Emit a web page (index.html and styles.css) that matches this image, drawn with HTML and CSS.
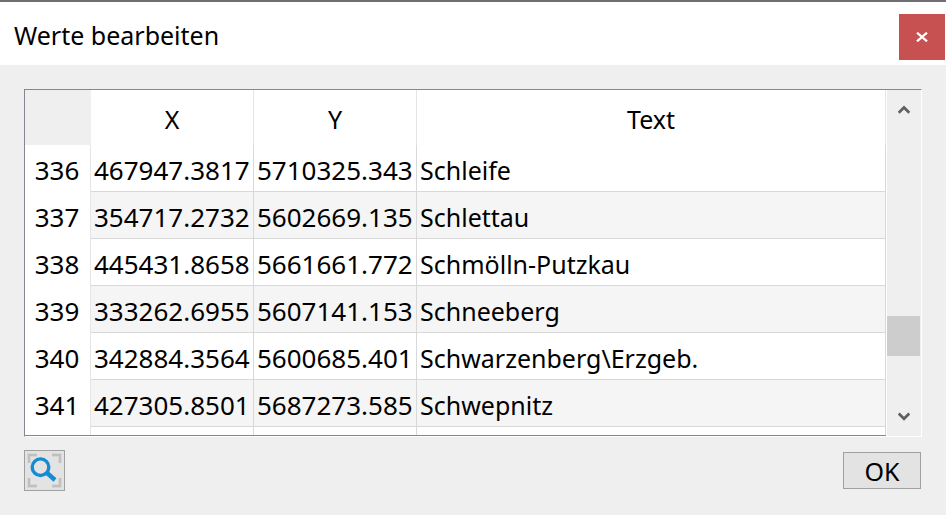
FILE: index.html
```html
<!DOCTYPE html>
<html lang="de">
<head>
    <meta charset="UTF-8">
    <meta name="viewport" content="width=device-width, initial-scale=1.0">
    <title>Werte bearbeiten</title>
    <link rel="stylesheet" href="styles.css">
</head>
<body>
    <header class="title-bar">
        <h1>Werte bearbeiten</h1>
        <button type="button" class="close-button" aria-label="Schließen">
            <svg width="12" height="10" viewBox="0 0 12 10"><path d="M1 0.7L11 9.3M11 0.7L1 9.3" stroke="#fff" stroke-width="2.3" fill="none"/></svg>
        </button>
    </header>
    <main class="content">
        <div class="table-frame">
            <div class="table-view">
                <table class="values-table">
                    <colgroup>
                        <col class="col-number">
                        <col class="col-coord">
                        <col class="col-coord">
                        <col>
                    </colgroup>
                    <thead>
                        <tr><td class="corner"></td><th scope="col">X</th><th scope="col">Y</th><th scope="col">Text</th></tr>
                    </thead>
                    <tbody>
                        <tr><th scope="row">336</th><td>467947.3817</td><td>5710325.343</td><td class="name">Schleife</td></tr>
                        <tr><th scope="row">337</th><td>354717.2732</td><td>5602669.135</td><td class="name">Schlettau</td></tr>
                        <tr><th scope="row">338</th><td>445431.8658</td><td>5661661.772</td><td class="name">Schmölln-Putzkau</td></tr>
                        <tr><th scope="row">339</th><td>333262.6955</td><td>5607141.153</td><td class="name">Schneeberg</td></tr>
                        <tr><th scope="row">340</th><td>342884.3564</td><td>5600685.401</td><td class="name">Schwarzenberg\Erzgeb.</td></tr>
                        <tr><th scope="row">341</th><td>427305.8501</td><td>5687273.585</td><td class="name">Schwepnitz</td></tr>
                        <tr><th scope="row"></th><td></td><td></td><td></td></tr>
                    </tbody>
                </table>
            </div>
            <div class="scrollbar">
                <button type="button" class="scroll-button" aria-label="Nach oben">
                    <svg width="12" height="10" viewBox="0 0 12 10"><path d="M0.7 7.8L6 2.5L11.3 7.8" stroke="#606060" stroke-width="2.8" fill="none"/></svg>
                </button>
                <div class="track-above"></div>
                <div class="thumb"></div>
                <div class="track-below"></div>
                <button type="button" class="scroll-button" aria-label="Nach unten">
                    <svg width="12" height="10" viewBox="0 0 12 10"><path d="M0.7 2.5L6 7.8L11.3 2.5" stroke="#606060" stroke-width="2.8" fill="none"/></svg>
                </button>
            </div>
        </div>
        <div class="footer">
            <button type="button" class="zoom-button" aria-label="Zoomen">
                <svg width="39" height="39" viewBox="0 0 39 39" fill="none">
                    <path d="M4 12V4H12M27 4H35V12M35 27V35H27M12 35H4V27" stroke="#d6d6d6" stroke-width="4"/>
                    <path d="M4 12V4H12M27 4H35V12M35 27V35H27M12 35H4V27" stroke="#c0c0c0" stroke-width="2"/>
                    <circle cx="15.5" cy="16.2" r="8.3" stroke="#148bd2" stroke-width="3.4"/>
                    <path d="M21.5 21.5L30 29" stroke="#148bd2" stroke-width="4.4"/>
                </svg>
            </button>
            <button type="button" class="ok-button">OK</button>
        </div>
    </main>
</body>
</html>
```
FILE: styles.css
```css
* {
    box-sizing: border-box;
}
body {
    font-family: 'Noto Sans', 'Segoe UI', sans-serif;
    font-size: 25px;
    margin: 0;
    height: 100vh;
    min-height: 300px;
    display: flex;
    flex-direction: column;
    background-color: #efefef;
    color: #000;
}
button {
    display: flex;
    justify-content: center;
    align-items: center;
    padding: 0;
    border: none;
    font: inherit;
    color: inherit;
}
.title-bar {
    display: flex;
    justify-content: space-between;
    align-items: flex-start;
    padding: 12px 1px 5px 14px;
    background-color: #fff;
    border-top: 2px solid #706e70;
}
.title-bar h1 {
    margin: 0;
    font-size: 25px;
    font-weight: normal;
    line-height: 42px;
}
.close-button {
    width: 46px;
    height: 46px;
    background-color: #c75050;
}
.content {
    flex: 1;
    min-height: 0;
    display: flex;
    flex-direction: column;
    padding: 24px;
}
.table-frame {
    flex: 1;
    min-height: 0;
    display: flex;
    border-top: 1px solid #828790;
    border-left: 1px solid #828790;
    border-right: 1px solid #fff;
    border-bottom: 1px solid #fff;
}
.table-view {
    flex: 1;
    min-width: 0;
    overflow: hidden;
    background-color: #fff;
    border-bottom: 1px solid #828790;
}
.values-table {
    width: 100%;
    table-layout: fixed;
    border-collapse: separate;
    border-spacing: 0;
}
.col-number {
    width: 66px;
}
.col-coord {
    width: 163px;
}
.values-table th {
    padding: 0;
    font-weight: normal;
    text-align: center;
    border-right: 1px solid #e5e5e5;
}
.values-table thead th {
    height: 55px;
    padding-top: 2px;
    line-height: 36px;
}
.values-table .corner {
    background-color: #efefef;
    border: none;
}
.values-table tbody th {
    height: 47px;
    padding: 2px 1px 0 0;
    font-size: 26px;
    line-height: 36px;
}
.values-table td {
    padding: 3px 0 0 3px;
    font-size: 26px;
    line-height: 36px;
    white-space: nowrap;
    border-right: 1px solid #d8d8d8;
    border-bottom: 1px solid #d8d8d8;
}
.values-table .name {
    font-size: 25px;
}
.values-table tbody tr:nth-child(even) td {
    background-color: #f5f5f5;
}
.scrollbar {
    width: 35px;
    display: flex;
    flex-direction: column;
    border-left: 1px solid #fff;
    background-color: #efefef;
}
.scroll-button {
    height: 40px;
    background-color: #efefef;
}
.track-above {
    flex: 33;
}
.thumb {
    height: 40px;
    margin-right: 1px;
    background-color: #cdcdcd;
}
.track-below {
    flex: 7;
}
.footer {
    display: flex;
    justify-content: space-between;
    align-items: center;
    padding: 13px 1px 0 0;
}
.zoom-button {
    width: 41px;
    height: 41px;
    background-color: #e3e3e3;
    border: 1px solid #a0a0a0;
}
.ok-button {
    width: 78px;
    height: 37px;
    background-color: #e3e3e3;
    border: 1px solid #a0a0a0;
}
```
